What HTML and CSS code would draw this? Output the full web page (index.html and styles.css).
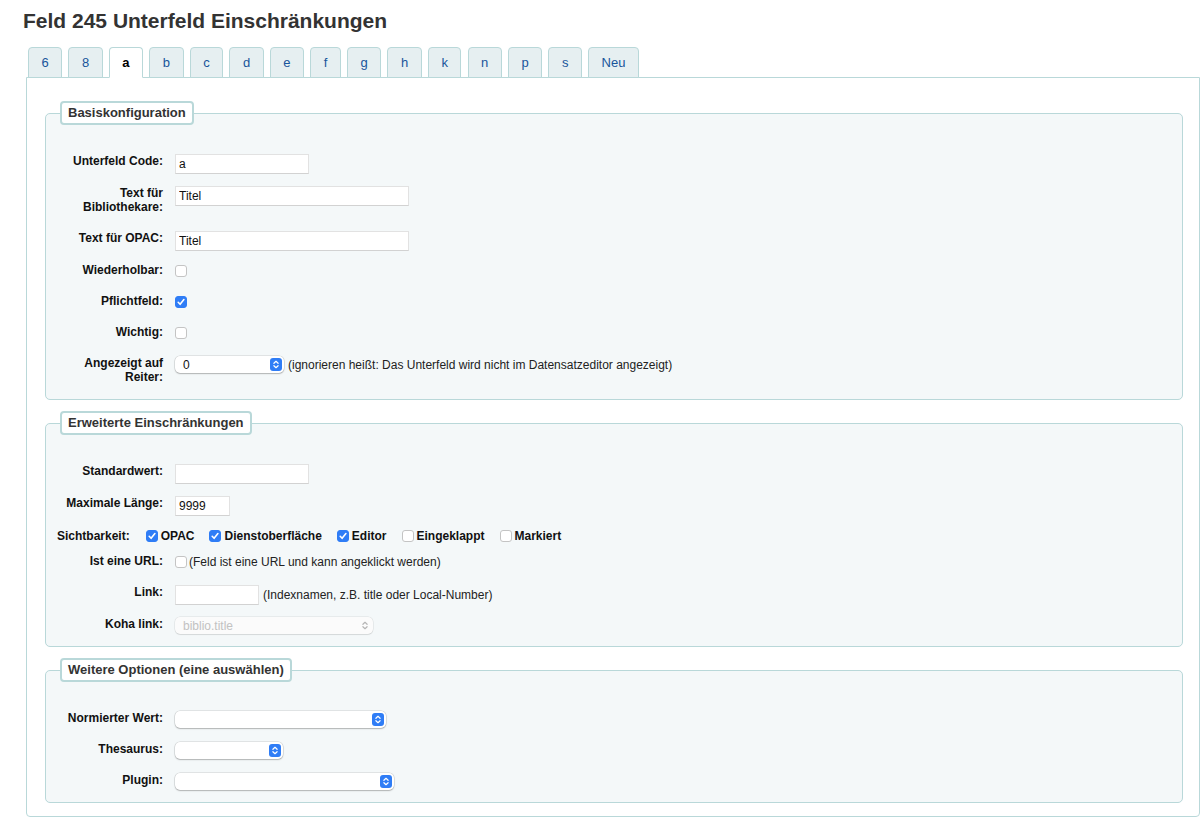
FILE: index.html
```html
<!DOCTYPE html>
<html lang="de">
<head>
<meta charset="utf-8">
<title>Feld 245 Unterfeld Einschränkungen</title>
<link rel="stylesheet" href="styles.css">
</head>
<body>
<div class="page">
  <h1>Feld 245 Unterfeld Einschränkungen</h1>
  <ul class="tabs">
    <li><a>6</a></li>
    <li><a>8</a></li>
    <li class="active"><a>a</a></li>
    <li><a>b</a></li>
    <li><a>c</a></li>
    <li><a>d</a></li>
    <li><a>e</a></li>
    <li><a>f</a></li>
    <li><a>g</a></li>
    <li><a>h</a></li>
    <li><a>k</a></li>
    <li><a>n</a></li>
    <li><a>p</a></li>
    <li><a>s</a></li>
    <li><a>Neu</a></li>
  </ul>
  <div class="panel">
    <fieldset class="rows">
      <legend>Basiskonfiguration</legend>
      <ol>
        <li><label class="lbl">Unterfeld Code:</label><input class="txt w-134" type="text" value="a"></li>
        <li><label class="lbl">Text für Bibliothekare:</label><input class="txt w-234" type="text" value="Titel"></li>
        <li><label class="lbl">Text für OPAC:</label><input class="txt w-234" type="text" value="Titel"></li>
        <li><label class="lbl">Wiederholbar:</label><span class="cb"></span></li>
        <li><label class="lbl">Pflichtfeld:</label><span class="cb on"><svg width="10" height="10" viewBox="0 0 10 10"><path d="M2.2 5.3 4.1 7.3 7.9 2.6" fill="none" stroke="#fff" stroke-width="1.6" stroke-linecap="round" stroke-linejoin="round"/></svg></span></li>
        <li><label class="lbl">Wichtig:</label><span class="cb"></span></li>
        <li><label class="lbl">Angezeigt auf Reiter:</label>
          <div class="ctl">
            <span class="select w-109"><span>0</span><svg class="arr" width="12" height="13" viewBox="0 0 12 13"><rect width="12" height="13" rx="3" fill="#2f7df6"/><path d="M3.9 5.3 6 3.3 8.1 5.3M3.9 7.7 6 9.7 8.1 7.7" fill="none" stroke="#fff" stroke-width="1.2" stroke-linecap="round" stroke-linejoin="round"/></svg></span>
            <span class="hint">(ignorieren heißt: Das Unterfeld wird nicht im Datensatzeditor angezeigt)</span>
          </div>
        </li>
      </ol>
    </fieldset>

    <fieldset class="rows">
      <legend>Erweiterte Einschränkungen</legend>
      <ol>
        <li><label class="lbl">Standardwert:</label><input class="txt w-134" type="text" value=""></li>
        <li><label class="lbl">Maximale Länge:</label><input class="txt w-55" type="text" value="9999"></li>
        <li class="inline">
          <span class="ilbl">Sichtbarkeit:</span>
          <span class="opt"><span class="cb on"><svg width="10" height="10" viewBox="0 0 10 10"><path d="M2.2 5.3 4.1 7.3 7.9 2.6" fill="none" stroke="#fff" stroke-width="1.6" stroke-linecap="round" stroke-linejoin="round"/></svg></span>OPAC</span>
          <span class="opt"><span class="cb on"><svg width="10" height="10" viewBox="0 0 10 10"><path d="M2.2 5.3 4.1 7.3 7.9 2.6" fill="none" stroke="#fff" stroke-width="1.6" stroke-linecap="round" stroke-linejoin="round"/></svg></span>Dienstoberfläche</span>
          <span class="opt"><span class="cb on"><svg width="10" height="10" viewBox="0 0 10 10"><path d="M2.2 5.3 4.1 7.3 7.9 2.6" fill="none" stroke="#fff" stroke-width="1.6" stroke-linecap="round" stroke-linejoin="round"/></svg></span>Editor</span>
          <span class="opt"><span class="cb"></span>Eingeklappt</span>
          <span class="opt"><span class="cb"></span>Markiert</span>
        </li>
        <li><label class="lbl">Ist eine URL:</label>
          <div class="ctl cbctl"><span class="cb"></span><span class="hint tight">(Feld ist eine URL und kann angeklickt werden)</span></div>
        </li>
        <li><label class="lbl">Link:</label>
          <div class="ctl"><input class="txt w-84" type="text" value=""><span class="hint">(Indexnamen, z.B. title oder Local-Number)</span></div>
        </li>
        <li><label class="lbl">Koha link:</label>
          <span class="select disabled w-198"><span>biblio.title</span><svg class="arr" width="12" height="13" viewBox="0 0 12 13"><path d="M3.9 5.3 6 3.3 8.1 5.3M3.9 7.7 6 9.7 8.1 7.7" fill="none" stroke="#b5b5b5" stroke-width="1.2" stroke-linecap="round" stroke-linejoin="round"/></svg></span>
        </li>
      </ol>
    </fieldset>

    <fieldset class="rows">
      <legend>Weitere Optionen (eine auswählen)</legend>
      <ol>
        <li><label class="lbl">Normierter Wert:</label>
          <span class="select w-211"><span></span><svg class="arr" width="12" height="13" viewBox="0 0 12 13"><rect width="12" height="13" rx="3" fill="#2f7df6"/><path d="M3.9 5.3 6 3.3 8.1 5.3M3.9 7.7 6 9.7 8.1 7.7" fill="none" stroke="#fff" stroke-width="1.2" stroke-linecap="round" stroke-linejoin="round"/></svg></span>
        </li>
        <li><label class="lbl">Thesaurus:</label>
          <span class="select w-108"><span></span><svg class="arr" width="12" height="13" viewBox="0 0 12 13"><rect width="12" height="13" rx="3" fill="#2f7df6"/><path d="M3.9 5.3 6 3.3 8.1 5.3M3.9 7.7 6 9.7 8.1 7.7" fill="none" stroke="#fff" stroke-width="1.2" stroke-linecap="round" stroke-linejoin="round"/></svg></span>
        </li>
        <li><label class="lbl">Plugin:</label>
          <span class="select w-219"><span></span><svg class="arr" width="12" height="13" viewBox="0 0 12 13"><rect width="12" height="13" rx="3" fill="#2f7df6"/><path d="M3.9 5.3 6 3.3 8.1 5.3M3.9 7.7 6 9.7 8.1 7.7" fill="none" stroke="#fff" stroke-width="1.2" stroke-linecap="round" stroke-linejoin="round"/></svg></span>
        </li>
      </ol>
    </fieldset>
  </div>
</div>
</body>
</html>
```

FILE: styles.css
```css
html, body {
  margin: 0;
  padding: 0;
  background: #fff;
}

body {
  font-family: "Liberation Sans", Arial, Helvetica, sans-serif;
  font-size: 12px;
  color: #000;
}

.page {
  padding: 0 0 0 23px;
}

h1 {
  margin: 10px 0 0 0;
  font-size: 21px;
  line-height: 22px;
  font-weight: bold;
  color: #333;
}

/* Tabs */
.tabs {
  list-style: none;
  display: flex;
  gap: 6.2px;
  margin: 15px 0 -1px 5px;
  padding: 0;
}

.tabs li {
  position: relative;
  z-index: 1;
}

.tabs a {
  display: block;
  height: 29px;
  line-height: 29px;
  padding: 0 12.5px;
  border: 1px solid #b9d8d9;
  border-radius: 4px 4px 0 0;
  background: #e6eff1;
  color: #18559b;
  font-size: 13px;
  cursor: pointer;
}

.tabs .active a {
  background: #fff;
  border-bottom-color: #fff;
  color: #000;
  font-weight: bold;
}

/* Panel */
.panel {
  margin-left: 3px;
  border: 1px solid #b9d8d9;
  border-radius: 0 0 4px 4px;
  padding: 23px 16px 13px 18px;
  background: #fff;
}

fieldset.rows {
  margin: 0 0 11px 0;
  padding: 23px 0 4px 0;
  border: 1px solid #b9d8d9;
  border-radius: 5px;
  background: #f4f8f9;
  min-width: 0;
}

fieldset.rows:last-child {
  margin-bottom: 0;
}

fieldset.rows legend {
  margin-left: 14px;
  padding: 3px 6px;
  border: 2px solid #b9d8d9;
  border-radius: 4px;
  background: #fff;
  font-size: 13px;
  line-height: 14px;
  font-weight: bold;
  color: #333;
}

fieldset.rows ol {
  list-style: none;
  margin: 0;
  padding: 0;
}

fieldset.rows li {
  display: flex;
  align-items: flex-start;
  padding: 6px 0 6px 7px;
}

.lbl {
  flex: 0 0 110px;
  width: 110px;
  margin-right: 12px;
  padding-bottom: 5px;
  text-align: right;
  font-weight: bold;
  line-height: 14px;
  color: #111;
}

.txt {
  box-sizing: border-box;
  height: 20px;
  margin: 0;
  padding: 0 3px;
  border: 1px solid #e2e2e2;
  border-bottom-color: #d2d2d2;
  border-radius: 0;
  background: #fff;
  font-family: "Liberation Sans", Arial, sans-serif;
  font-size: 12px;
  color: #111;
  outline: none;
}

.w-55 { width: 55px; }
.w-84 { width: 84px; }
.w-134 { width: 134px; }
.w-234 { width: 234px; }
.w-108 { width: 108px; }
.w-109 { width: 109px; }
.w-198 { width: 198px; }
.w-211 { width: 211px; }
.w-219 { width: 219px; }

/* checkboxes */
.cb {
  box-sizing: border-box;
  flex: 0 0 12px;
  width: 12px;
  height: 12px;
  margin-top: 2px;
  border: 1px solid #c4c4c4;
  border-radius: 3px;
  background: #fff;
  display: inline-flex;
  align-items: center;
  justify-content: center;
}

.cb.on {
  border-color: #2f7df6;
  background: #2f7df6;
}

.cb svg {
  display: block;
}

/* select look-alike */
.select {
  box-sizing: border-box;
  display: inline-flex;
  align-items: center;
  justify-content: space-between;
  height: 17px;
  padding: 0 2px 0 8px;
  border-radius: 5px;
  background: #fff;
  box-shadow: 0 0 0 0.5px rgba(0, 0, 0, 0.16), 0 1px 1.5px rgba(0, 0, 0, 0.22);
  font-size: 12px;
  color: #111;
}

.select .arr {
  display: block;
  flex: 0 0 12px;
}

.select.disabled {
  background: #fbfbfb;
  color: #c2c2c2;
  box-shadow: 0 0 0 0.5px rgba(0, 0, 0, 0.1), 0 1px 1px rgba(0, 0, 0, 0.08);
}

.ctl {
  display: flex;
  align-items: center;
}

.ctl.cbctl .cb {
  margin-top: 0;
}

.ctl.cbctl {
  margin-top: 1px;
}

.hint {
  margin-left: 4px;
  line-height: 14px;
  color: #222;
}

.hint.tight {
  margin-left: 2px;
}

/* inline checkbox row */
fieldset.rows li.inline {
  align-items: center;
  padding: 7px 0 5px 11px;
  font-weight: bold;
  line-height: 14px;
}

.ilbl {
  margin-right: 16px;
  color: #111;
}

.opt {
  display: inline-flex;
  align-items: center;
  margin-right: 15px;
  color: #111;
}

.opt .cb {
  margin: 0 3px 0 0;
}
```
